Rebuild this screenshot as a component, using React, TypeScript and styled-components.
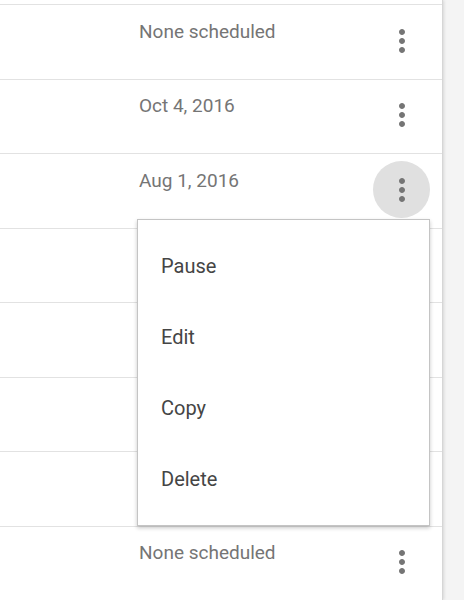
import React from 'react';
import styled, {createGlobalStyle} from 'styled-components';

const GlobalStyle = createGlobalStyle`
  html, body {
    margin: 0;
    padding: 0;
    background: #f4f4f4;
    font-family: Roboto, "Liberation Sans", Arial, sans-serif;
  }
`;

const Page = styled.div`
  display: flex;
  height: 600px;
  overflow: hidden;
`;

const Panel = styled.div`
  width: 442px;
  flex-shrink: 0;
  background: #fff;
  border-right: 1px solid #d6d6d6;
  box-shadow: 1px 0 3px rgba(0, 0, 0, 0.12);
  overflow: hidden;
`;

const List = styled.div`
  margin-top: -69.5px;
`;

const Row = styled.div`
  display: grid;
  grid-template-columns: 139px 1fr 69px;
  height: 73.5px;
  border-bottom: 1px solid #e2e2e2;
`;

const DateCell = styled.div`
  padding-top: 14.5px;
  font-size: 19px;
  line-height: 24px;
  color: #757575;
`;

const ActionCell = styled.div`
  position: relative;
  padding-top: 7px;
`;

const IconButton = styled.button<{active?: boolean}>`
  width: 57px;
  height: 57px;
  border: none;
  padding: 0;
  border-radius: 50%;
  display: flex;
  align-items: center;
  justify-content: center;
  background: ${props => (props.active ? '#e0e0e0' : 'transparent')};
  color: #757575;
  cursor: pointer;
`;

const Menu = styled.div`
  position: absolute;
  top: 65px;
  right: 12px;
  width: 291px;
  padding: 10.5px 0;
  background: #fff;
  border: 1px solid #c4c4c4;
  box-shadow: 0 2px 4px rgba(0, 0, 0, 0.22);
  z-index: 2;
`;

const MenuItem = styled.div`
  height: 71px;
  display: flex;
  align-items: center;
  padding-left: 23px;
  font-size: 20px;
  color: #454545;
`;

function MoreVert() {
  return (
    <svg width="36" height="36" viewBox="0 0 24 24" fill="currentColor">
      <path d="M12 8c1.1 0 2-.9 2-2s-.9-2-2-2-2 .9-2 2 .9 2 2 2zm0 2c-1.1 0-2 .9-2 2s.9 2 2 2 2-.9 2-2-.9-2-2-2zm0 6c-1.1 0-2 .9-2 2s.9 2 2 2 2-.9 2-2-.9-2-2-2z" />
    </svg>
  );
}

// rows hidden above the fold or under the open menu carry no visible date
const ROWS = [
  {id: 0, date: ''},
  {id: 1, date: 'None scheduled'},
  {id: 2, date: 'Oct 4, 2016'},
  {id: 3, date: 'Aug 1, 2016', open: true},
  {id: 4, date: ''},
  {id: 5, date: ''},
  {id: 6, date: ''},
  {id: 7, date: ''},
  {id: 8, date: 'None scheduled'},
];

const MENU = ['Pause', 'Edit', 'Copy', 'Delete'];

export default function App(): React.ReactElement {
  return (
    <>
      <GlobalStyle />
      <Page>
        <Panel>
          <List>
            {ROWS.map(row => (
              <Row key={row.id}>
                <div />
                <DateCell>{row.date}</DateCell>
                <ActionCell>
                  <IconButton active={row.open} aria-label="More">
                    <MoreVert />
                  </IconButton>
                  {row.open ? (
                    <Menu>
                      {MENU.map(item => (
                        <MenuItem key={item}>{item}</MenuItem>
                      ))}
                    </Menu>
                  ) : null}
                </ActionCell>
              </Row>
            ))}
          </List>
        </Panel>
      </Page>
    </>
  );
}
